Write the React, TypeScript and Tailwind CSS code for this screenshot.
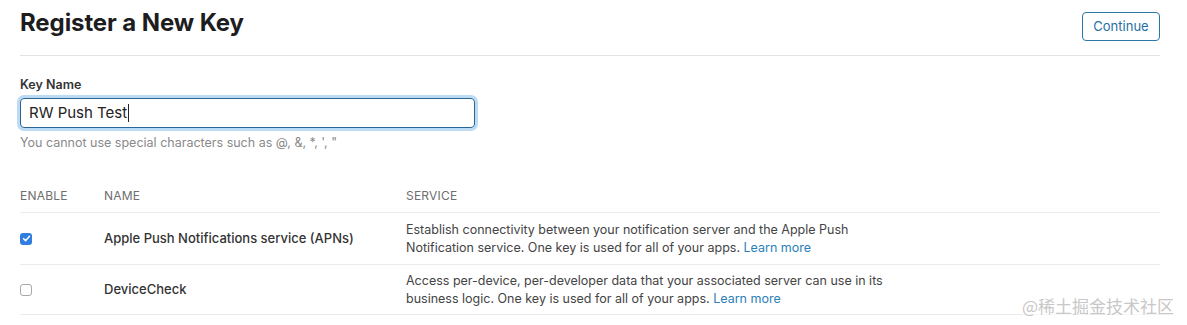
import React from "react";

export default function App() {
  const font = { fontFamily: 'Inter, "Noto Sans CJK SC", sans-serif' };
  return (
    <div className="w-[1187px] h-[325px] bg-white relative overflow-hidden" style={font}>
      <div className="ml-5 w-[1140px]">
        <div className="flex justify-between items-start h-[56px] border-b border-[#e3e3e3]">
          <h1 className="mt-[9px] text-[24px] leading-[28px] font-bold text-[#1d1d1f] tracking-[-0.1px]">
            Register a New Key
          </h1>
          <button className="mt-3 w-[78px] h-[29px] border border-[#2b77a8] rounded-[4px] text-[13px] text-[#1f6fa3] flex items-center justify-center">
            Continue
          </button>
        </div>
        <div className="mt-[21px] text-[12.5px] leading-[16px] font-semibold text-[#333]">Key Name</div>
        <div className="mt-[5px] w-[455px] h-[30px] border border-[#2c6591] rounded-[4px] shadow-[0_0_0_3px_#bcdcf6] flex items-center pl-2 text-[15px] text-[#222]">
          RW Push Test<span className="inline-block w-px h-[18px] bg-[#222] ml-[1px]" />
        </div>
        <div className="mt-[7px] text-[12.5px] leading-[16px] text-[#8a8a8a]">
          You cannot use special characters such as @, &amp;, *, ', "
        </div>
        <div className="mt-[26px] flex items-center h-[36px] border-b border-[#ebebeb] text-[12px] text-[#6e6e6e] tracking-[0.2px] pt-[2px]">
          <div className="w-[84px]">ENABLE</div>
          <div className="w-[302px]">NAME</div>
          <div>SERVICE</div>
        </div>
        <div className="flex items-center h-[52px] border-b border-[#ebebeb]">
          <div className="w-[84px] flex">
            <span className="w-[12px] h-[12px] rounded-[3px] bg-[#2f7ee0] flex items-center justify-center">
              <svg width="9" height="9" viewBox="0 0 10 10">
                <path d="M1.8 5.2 L4 7.4 L8.3 2.6" fill="none" stroke="white" strokeWidth="1.7" strokeLinecap="round" strokeLinejoin="round" />
              </svg>
            </span>
          </div>
          <div className="w-[302px] text-[13px] font-medium text-[#333]">Apple Push Notifications service (APNs)</div>
          <div className="text-[12.5px] leading-[18px] text-[#444]">
            Establish connectivity between your notification server and the Apple Push
            <br />
            Notification service. One key is used for all of your apps. <span className="text-[#2a80b9]">Learn more</span>
          </div>
        </div>
        <div className="flex items-center h-[50px] border-b border-[#ebebeb]">
          <div className="w-[84px] flex">
            <span className="w-[12px] h-[12px] rounded-[3px] border border-[#a8a8a8] bg-white" />
          </div>
          <div className="w-[302px] text-[13px] font-medium text-[#333]">DeviceCheck</div>
          <div className="text-[12.5px] leading-[18px] text-[#444]">
            Access per-device, per-developer data that your associated server can use in its
            <br />
            business logic. One key is used for all of your apps. <span className="text-[#2a80b9]">Learn more</span>
          </div>
        </div>
      </div>
      <div className="absolute left-[1022px] top-[295px] text-[17px] leading-[22px] text-[#c8c8c8] bg-white/60" style={{ fontFamily: '"Noto Sans CJK SC", sans-serif' }}>
        @稀土掘金技术社区
      </div>
    </div>
  );
}
